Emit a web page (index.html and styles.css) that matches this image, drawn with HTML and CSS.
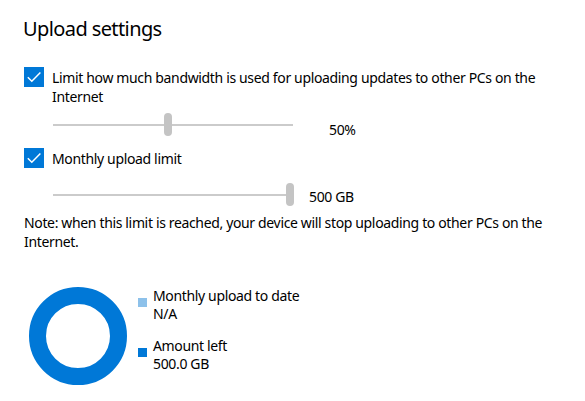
FILE: index.html
```html
<!DOCTYPE html>
<html lang="en">
<head>
    <meta charset="UTF-8">
    <meta name="viewport" content="width=device-width, initial-scale=1.0">
    <title>Upload settings</title>
    <link rel="stylesheet" href="styles.css">
</head>
<body>
    <div class="settings">
        <h2>Upload settings</h2>

        <div class="check-row">
            <span class="checkbox">
                <svg width="20" height="20" viewBox="0 0 20 20"><path d="M3.8 10.2 L7.8 14.2 L16.4 5.4" fill="none" stroke="#fff" stroke-width="1.5"/></svg>
            </span>
            <span class="check-label">Limit how much bandwidth is used for uploading updates to other PCs on the Internet</span>
        </div>

        <div class="slider-row first">
            <div class="slider">
                <div class="track"></div>
                <div class="thumb" style="left: 111px"></div>
            </div>
            <span class="slider-value wide">50%</span>
        </div>

        <div class="check-row">
            <span class="checkbox">
                <svg width="20" height="20" viewBox="0 0 20 20"><path d="M3.8 10.2 L7.8 14.2 L16.4 5.4" fill="none" stroke="#fff" stroke-width="1.5"/></svg>
            </span>
            <span class="check-label">Monthly upload limit</span>
        </div>

        <div class="slider-row second">
            <div class="slider">
                <div class="track"></div>
                <div class="thumb" style="left: 233px"></div>
            </div>
            <span class="slider-value">500 GB</span>
        </div>

        <p class="note">Note: when this limit is reached, your device will stop uploading to other PCs on the Internet.</p>

        <div class="usage">
            <div class="donut"></div>
            <div class="legend">
                <div class="legend-item">
                    <span class="swatch used"></span>
                    <div>
                        <div>Monthly upload to date</div>
                        <div>N/A</div>
                    </div>
                </div>
                <div class="legend-item">
                    <span class="swatch left"></span>
                    <div>
                        <div>Amount left</div>
                        <div>500.0 GB</div>
                    </div>
                </div>
            </div>
        </div>
    </div>
</body>
</html>
```

FILE: styles.css
```css
body {
    margin: 0;
    background: #fff;
    color: #000;
    font-family: "Noto Sans", "Open Sans", sans-serif;
    font-size: 14px;
    line-height: 19px;
    letter-spacing: -0.35px;
}
.settings {
    padding: 16px 24px 0 24px;
}
h2 {
    margin: 0 0 25px -1px;
    font-size: 20px;
    font-weight: 400;
    line-height: 26px;
    letter-spacing: -0.6px;
}
.check-row {
    display: flex;
    align-items: flex-start;
    width: 525px;
}
.checkbox {
    flex: none;
    width: 20px;
    height: 20px;
    background: #0078d7;
    margin-right: 8px;
}
.checkbox svg {
    display: block;
}
.check-label {
    padding-top: 1px;
}
.slider-row {
    display: flex;
    align-items: center;
    height: 24px;
    margin: 7px 0 11px 29px;
}
.slider-row.second {
    margin: 15px 0 6px 29px;
}
.slider {
    position: relative;
    width: 240px;
    height: 24px;
}
.track {
    position: absolute;
    left: 0;
    right: 0;
    top: 11px;
    height: 2px;
    background: #cbcbcb;
}
.thumb {
    position: absolute;
    top: 0;
    width: 8px;
    height: 23px;
    border-radius: 4px;
    background: #c4c4c4;
}
.slider-value {
    margin-left: 16px;
    padding-top: 3px;
}
.slider-value.wide {
    margin-left: 36px;
    padding-top: 8px;
}
.note {
    margin: 0;
    width: 530px;
}
.usage {
    display: flex;
    align-items: flex-start;
    margin-top: 36px;
}
.donut {
    flex: none;
    width: 64px;
    height: 64px;
    margin-left: 5px;
    border: 17px solid #0078d7;
    border-radius: 50%;
}
.legend {
    margin-left: 11px;
    line-height: 18px;
}
.legend-item {
    display: flex;
    align-items: flex-start;
    margin-bottom: 14px;
}
.swatch {
    flex: none;
    width: 9px;
    height: 9px;
    margin: 11px 6px 0 0;
}
.swatch.used {
    background: #8dc1ea;
}
.swatch.left {
    background: #0078d7;
}
```
